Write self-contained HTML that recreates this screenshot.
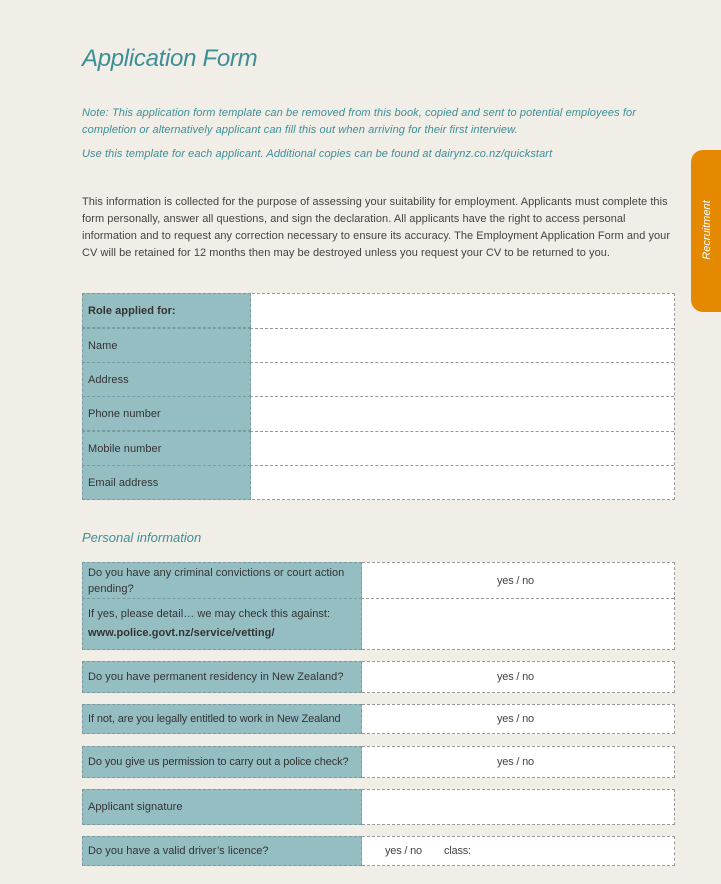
<!DOCTYPE html>
<html><head><meta charset="utf-8"><style>
body{margin:0;width:721px;height:884px;background:#f1ede7;font-family:"Liberation Sans",sans-serif;color:#444;position:relative;overflow:hidden}
.a{position:absolute;white-space:nowrap}
h1{position:absolute;left:82px;top:45px;margin:0;font-size:24px;font-weight:normal;font-style:italic;color:#3d8f96;letter-spacing:-0.3px}
.note{color:#3d8f96;font-style:italic;font-size:11px;letter-spacing:0.1px}
.p{font-size:11px;letter-spacing:0.05px;color:#444}
.tab{position:absolute;left:691px;top:150px;width:40px;height:162px;background:#e58a00;border-radius:12px 0 0 12px}
.tab span{position:absolute;left:-24px;top:74px;width:100px;transform:rotate(-90deg);color:#fff;font-style:italic;font-size:11px;text-align:center;margin-left:-10px}
.box{position:absolute;border:1px dashed #999;background:#fff;box-sizing:border-box}
.ln{position:absolute;border-top:1px dashed #999;height:0}
.lab{position:absolute;background:#95bec3;border:1px dashed #7a9a9e;box-sizing:border-box;font-size:11px;color:#333;letter-spacing:0.05px;padding-left:5px;display:flex;flex-direction:column;justify-content:center;line-height:16px;white-space:nowrap}
.yn{position:absolute;font-size:11px;color:#444;letter-spacing:-0.2px}
.h2{position:absolute;left:82px;top:530px;color:#3d8f96;font-style:italic;font-size:13px;letter-spacing:0px}
</style></head><body>
<h1>Application Form</h1>
<div class="a note" style="left:82px;top:107px">Note: This application form template can be removed from this book, copied and sent to potential employees for</div>
<div class="a note" style="left:82px;top:124px">completion or alternatively applicant can fill this out when arriving for their first interview.</div>
<div class="a note" style="left:82px;top:148px">Use this template for each applicant. Additional copies can be found at dairynz.co.nz/quickstart</div>
<div class="a p" style="left:82px;top:196px">This information is collected for the purpose of assessing your suitability for employment. Applicants must complete this</div>
<div class="a p" style="left:82px;top:213px">form personally, answer all questions, and sign the declaration. All applicants have the right to access personal</div>
<div class="a p" style="left:82px;top:230px">information and to request any correction necessary to ensure its accuracy. The Employment Application Form and your</div>
<div class="a p" style="left:82px;top:247px">CV will be retained for 12 months then may be destroyed unless you request your CV to be returned to you.</div>
<div class="tab"><span>Recruitment</span></div>

<div class="box" style="left:82px;top:293px;width:593px;height:207px"></div>
<div class="ln" style="left:250px;top:328px;width:424px"></div>
<div class="ln" style="left:250px;top:362px;width:424px"></div>
<div class="ln" style="left:250px;top:396px;width:424px"></div>
<div class="ln" style="left:250px;top:431px;width:424px"></div>
<div class="ln" style="left:250px;top:465px;width:424px"></div>
<div class="lab" style="left:82px;top:293px;width:169px;height:35px;font-weight:bold">Role applied for:</div>
<div class="lab" style="left:82px;top:328px;width:169px;height:35px">Name</div>
<div class="lab" style="left:82px;top:362px;width:169px;height:35px">Address</div>
<div class="lab" style="left:82px;top:396px;width:169px;height:35px">Phone number</div>
<div class="lab" style="left:82px;top:431px;width:169px;height:35px">Mobile number</div>
<div class="lab" style="left:82px;top:465px;width:169px;height:35px">Email address</div>

<div class="h2">Personal information</div>

<div class="box" style="left:82px;top:562px;width:593px;height:88px"></div>
<div class="ln" style="left:361px;top:598px;width:313px"></div>
<div class="lab" style="left:82px;top:562px;width:280px;height:37px">Do you have any criminal convictions or court action<br>pending?</div>
<div class="lab" style="left:82px;top:598px;width:280px;height:52px;line-height:19px">If yes, please detail… we may check this against:<br><b>www.police.govt.nz/service/vetting/</b></div>
<div class="yn" style="left:497px;top:575px">yes / no</div>

<div class="box" style="left:82px;top:661px;width:593px;height:32px"></div>
<div class="lab" style="left:82px;top:661px;width:280px;height:32px">Do you have permanent residency in New Zealand?</div>
<div class="yn" style="left:497px;top:671px">yes / no</div>

<div class="box" style="left:82px;top:704px;width:593px;height:30px"></div>
<div class="lab" style="left:82px;top:704px;width:280px;height:30px;letter-spacing:-0.1px">If not, are you legally entitled to work in New Zealand</div>
<div class="yn" style="left:497px;top:713px">yes / no</div>

<div class="box" style="left:82px;top:746px;width:593px;height:32px"></div>
<div class="lab" style="left:82px;top:746px;width:280px;height:32px;letter-spacing:-0.1px">Do you give us permission to carry out a police check?</div>
<div class="yn" style="left:497px;top:756px">yes / no</div>

<div class="box" style="left:82px;top:789px;width:593px;height:36px"></div>
<div class="lab" style="left:82px;top:789px;width:280px;height:36px">Applicant signature</div>

<div class="box" style="left:82px;top:836px;width:593px;height:30px"></div>
<div class="lab" style="left:82px;top:836px;width:280px;height:30px">Do you have a valid driver’s licence?</div>
<div class="yn" style="left:385px;top:845px">yes / no</div>
<div class="yn" style="left:444px;top:845px">class:</div>
</body></html>
